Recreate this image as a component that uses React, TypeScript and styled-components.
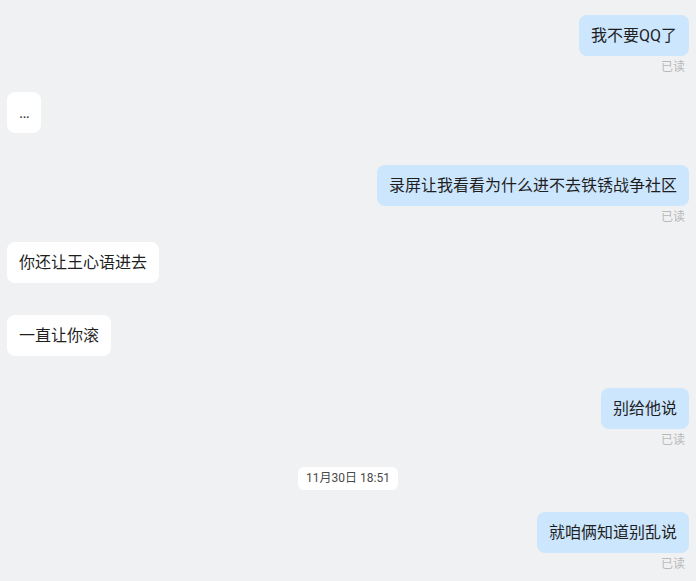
import { FC } from "react";
import styled, { createGlobalStyle } from "styled-components";

interface Message {
  id: number;
  kind: "sent" | "received" | "time";
  text: string;
  read?: boolean;
}

const messages: Message[] = [
  { id: 1, kind: "sent", text: "我不要QQ了", read: true },
  { id: 2, kind: "received", text: "..." },
  { id: 3, kind: "sent", text: "录屏让我看看为什么进不去铁锈战争社区", read: true },
  { id: 4, kind: "received", text: "你还让王心语进去" },
  { id: 5, kind: "received", text: "一直让你滚" },
  { id: 6, kind: "sent", text: "别给他说", read: true },
  { id: 7, kind: "time", text: "11月30日 18:51" },
  { id: 8, kind: "sent", text: "就咱俩知道别乱说", read: true },
];

const App: FC = () => {
  return (
    <>
      <GlobalStyle />
      <ChatList>
        {messages.map((msg) => {
          if (msg.kind === "time") {
            return (
              <TimeRow key={msg.id}>
                <TimeTag>{msg.text}</TimeTag>
              </TimeRow>
            );
          }
          const sent = msg.kind === "sent";
          return (
            <MessageGroup key={msg.id} $sent={sent} $read={!!msg.read}>
              <Bubble $sent={sent}>
                {msg.text === "..." ? <Dots>{msg.text}</Dots> : msg.text}
              </Bubble>
              {msg.read && <ReadLabel>已读</ReadLabel>}
            </MessageGroup>
          );
        })}
      </ChatList>
    </>
  );
};

export default App;

const GlobalStyle = createGlobalStyle`
  html, body {
    margin: 0;
    padding: 0;
    background-color: #f0f1f3;
  }

  body {
    font-family: Roboto, "Noto Sans CJK SC", sans-serif;
  }
`;

const ChatList = styled.div`
  width: 696px;
  height: 581px;
  box-sizing: border-box;
  padding: 15px 7px 0;
  display: flex;
  flex-direction: column;
  gap: 16px;
  background-color: #f0f1f3;
  overflow: hidden;
`;

const MessageGroup = styled.div<{ $sent: boolean; $read: boolean }>`
  display: flex;
  flex-direction: column;
  align-items: ${(p) => (p.$sent ? "flex-end" : "flex-start")};
  padding-bottom: ${(p) => (p.$read ? "0" : "16px")};
`;

const Bubble = styled.div<{ $sent: boolean }>`
  padding: 10px 12px;
  height: 21px;
  font-size: 16px;
  line-height: 21px;
  color: #1f1f1f;
  border-radius: 8px;
  background-color: ${(p) => (p.$sent ? "#cce6fe" : "#ffffff")};
`;

const Dots = styled.span`
  display: block;
  width: 10px;
  letter-spacing: -0.8px;
  color: #333333;
`;

const ReadLabel = styled.div`
  padding: 2px 4px 0 0;
  font-size: 12px;
  line-height: 18px;
  color: #b9b9b9;
`;

const TimeRow = styled.div`
  display: flex;
  justify-content: center;
  padding: 2px 0 6px;
`;

const TimeTag = styled.div`
  padding: 3px 8px;
  font-size: 12px;
  line-height: 17px;
  color: #4a4a4a;
  background-color: #ffffff;
  border-radius: 6px;
`;
